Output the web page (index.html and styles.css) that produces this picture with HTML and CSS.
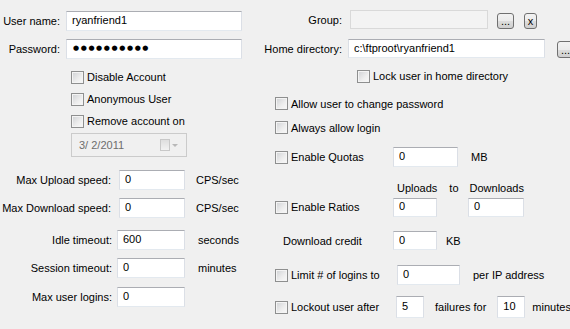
FILE: index.html
```html
<!DOCTYPE html>
<html lang="en">
<head>
    <meta charset="UTF-8">
    <title>User account</title>
    <link rel="stylesheet" href="styles.css">
</head>
<body>
    <div class="dialog">
        <div class="col-left">
            <div class="row r-user">
                <label class="lbl w-acct">User name:</label>
                <input type="text" class="field f-acct" value="ryanfriend1">
            </div>
            <div class="row r-pass">
                <label class="lbl w-acct">Password:</label>
                <input type="text" class="field f-acct secret" value="●●●●●●●●●●">
            </div>
            <div class="checks">
                <label class="check"><input type="checkbox"><span>Disable Account</span></label>
                <label class="check"><input type="checkbox"><span>Anonymous User</span></label>
                <label class="check"><input type="checkbox"><span>Remove account on</span></label>
            </div>
            <div class="date">
                <span class="date-text">3/ 2/2011</span>
                <span class="cal"></span>
                <span class="drop"></span>
            </div>
            <div class="row r-up">
                <label class="lbl w-speed">Max Upload speed:</label>
                <input type="text" class="field f-speed" value="0">
                <span class="unit">CPS/sec</span>
            </div>
            <div class="row r-down">
                <label class="lbl w-speed">Max Download speed:</label>
                <input type="text" class="field f-speed" value="0">
                <span class="unit">CPS/sec</span>
            </div>
            <div class="row r-idle">
                <label class="lbl w-time">Idle timeout:</label>
                <input type="text" class="field f-time" value="600">
                <span class="unit">seconds</span>
            </div>
            <div class="row r-sess">
                <label class="lbl w-time">Session timeout:</label>
                <input type="text" class="field f-time" value="0">
                <span class="unit">minutes</span>
            </div>
            <div class="row r-max">
                <label class="lbl w-time">Max user logins:</label>
                <input type="text" class="field f-time" value="0">
            </div>
        </div>

        <div class="col-right">
            <div class="row r-group">
                <label class="lbl w-dir">Group:</label>
                <input type="text" class="field f-group" value="" disabled>
                <button class="btn b-dots">...</button>
                <button class="btn b-x">x</button>
            </div>
            <div class="row r-home">
                <label class="lbl w-dir">Home directory:</label>
                <input type="text" class="field f-home" value="c:\ftproot\ryanfriend1">
                <button class="btn b-dots b-home">...</button>
            </div>
            <label class="check r-lock"><input type="checkbox"><span>Lock user in home directory</span></label>

            <div class="opts">
                <label class="check r-allow"><input type="checkbox"><span>Allow user to change password</span></label>
                <label class="check r-always"><input type="checkbox"><span>Always allow login</span></label>

                <div class="row r-quota">
                    <label class="check w-opt"><input type="checkbox"><span>Enable Quotas</span></label>
                    <input type="text" class="field f-quota" value="0">
                    <span class="unit u-mb">MB</span>
                </div>
                <div class="row r-ratio-head">
                    <span class="h-up">Uploads</span>
                    <span class="h-to">to</span>
                    <span>Downloads</span>
                </div>
                <div class="row r-ratio">
                    <label class="check w-opt"><input type="checkbox"><span>Enable Ratios</span></label>
                    <input type="text" class="field f-small" value="0">
                    <input type="text" class="field f-ratio" value="0">
                </div>
                <div class="row r-credit">
                    <span class="w-opt credit">Download credit</span>
                    <input type="text" class="field f-small" value="0">
                    <span class="unit u-kb">KB</span>
                </div>
                <div class="row r-limit">
                    <label class="check w-opt2"><input type="checkbox"><span>Limit # of logins to</span></label>
                    <input type="text" class="field f-limit" value="0">
                    <span class="unit u-ip">per IP address</span>
                </div>
                <div class="row r-lockout">
                    <label class="check w-opt2 lo"><input type="checkbox"><span>Lockout user after</span></label>
                    <input type="text" class="field f-tiny" value="5">
                    <span class="unit u-fail">failures for</span>
                    <input type="text" class="field f-tiny f-min" value="10">
                    <span class="unit u-min">minutes</span>
                </div>
            </div>
        </div>
    </div>
</body>
</html>
```

FILE: styles.css
```css
body {
    margin: 0;
    background-color: #f0f0f0;
    font-family: "Liberation Sans", Tahoma, Arial, sans-serif;
    font-size: 11px;
    color: #000;
}
.dialog {
    display: flex;
    width: 570px;
    height: 329px;
    overflow: hidden;
}
.col-left {
    width: 256px;
    flex: none;
}
.col-right {
    flex: 1;
    min-width: 0;
}
.row {
    display: flex;
    align-items: center;
}
.lbl {
    flex: none;
    text-align: right;
}
.field {
    box-sizing: border-box;
    flex: none;
    height: 20px;
    margin: 0;
    padding: 0 0 2px 5px;
    font-family: inherit;
    font-size: 11px;
    color: #000;
    background-color: #fff;
    border: 1px solid #e3e9ef;
    border-top-color: #abadb3;
    border-left-color: #dbdfe6;
    border-right-color: #dbdfe6;
    outline: none;
}
.field:disabled {
    background-color: #f3f3f3;
    border-color: #d9d9d9;
}
.unit {
    flex: none;
}

/* account */
.w-acct { width: 60px; }
.f-acct { width: 176px; margin-left: 6px; }
.r-user { margin-top: 11px; }
.r-pass { margin-top: 8px; }
.secret {
    font-family: "DejaVu Sans", sans-serif;
    font-size: 7px;
    letter-spacing: 1.6px;
    padding-left: 6px;
}

/* checkboxes */
.check {
    display: flex;
    align-items: center;
    height: 22px;
}
.check input {
    appearance: none;
    -webkit-appearance: none;
    flex: none;
    width: 13px;
    height: 13px;
    margin: 0 3px 0 0;
    border: 1px solid #8e8f8f;
    background: linear-gradient(135deg, #cfd1d4 0%, #eeeeee 60%, #f9f9f9 100%);
    box-shadow: inset 0 0 0 1px #f4f4f4;
}
.checks {
    margin-top: 7px;
    padding-left: 71px;
}

/* date picker */
.date {
    box-sizing: border-box;
    display: flex;
    align-items: center;
    width: 116px;
    height: 24px;
    margin: 1px 0 0 71px;
    padding-left: 7px;
    border: 1px solid #cbcbcb;
    color: #6d6d6d;
}
.date-text {
    flex: 1;
}
.cal {
    width: 8px;
    height: 10px;
    border: 1px solid #c8c8c8;
    background: linear-gradient(#dedede, #f2f2f2);
}
.drop {
    width: 0;
    height: 0;
    margin: 0 8px 0 2px;
    border-left: 3px solid transparent;
    border-right: 3px solid transparent;
    border-top: 3px solid #b8b8b8;
}

/* limits */
.w-speed { width: 111px; }
.f-speed { width: 66px; margin-left: 8px; }
.r-up .unit, .r-down .unit { margin-left: 11px; }
.r-up { margin-top: 13px; }
.r-down { margin-top: 8px; }
.w-time { width: 112px; }
.f-time { width: 68px; margin-left: 5px; }
.r-idle .unit, .r-sess .unit { margin-left: 13px; }
.r-idle { margin-top: 12px; }
.r-sess { margin-top: 8px; }
.r-max { margin-top: 9px; }

/* group / home */
.w-dir { width: 86px; }
.r-group { margin-top: 10px; height: 19px; }
.f-group { width: 138px; height: 19px; margin-left: 8px; }
.r-home { margin-top: 10px; height: 19px; }
.f-home { width: 197px; height: 19px; margin-left: 6px; }
.btn {
    box-sizing: border-box;
    flex: none;
    height: 16px;
    padding: 0;
    font-family: inherit;
    font-size: 11px;
    line-height: 12px;
    color: #000;
    border: 1px solid #707070;
    border-radius: 3px;
    background: linear-gradient(#f2f2f2 0%, #ebebeb 50%, #dddddd 51%, #cfcfcf 100%);
}
.b-dots {
    width: 17px;
    margin-left: 9px;
    margin-top: 3px;
}
.b-x {
    width: 13px;
    margin-left: 10px;
    margin-top: 3px;
}
.b-home {
    margin-left: 12px;
    height: 17px;
    margin-top: 2px;
}
.r-lock {
    margin: 7px 0 0 101px;
    height: 22px;
}

/* options */
.opts {
    padding-left: 19px;
}
.r-allow { margin-top: 10px; height: 13px; }
.r-always { margin-top: 11px; height: 13px; }
.w-opt { width: 118px; flex: none; }
.w-opt2 { width: 122px; flex: none; }
.r-quota { margin-top: 12px; }
.f-quota { width: 65px; }
.u-mb { margin-left: 13px; }
.r-ratio-head { margin-top: 13px; height: 13px; padding-left: 122px; }
.h-up { margin-right: 12px; }
.h-to { margin-right: 11px; }
.r-ratio { margin-top: 2px; }
.f-small { width: 44px; height: 19px; }
.f-ratio { width: 56px; height: 19px; margin-left: 31px; }
.credit { padding-left: 8px; box-sizing: border-box; }
.r-credit { margin-top: 13px; }
.u-kb { margin-left: 9px; }
.r-limit { margin-top: 14px; }
.f-limit { width: 63px; }
.u-ip { margin-left: 13px; }
.r-lockout { margin-top: 10px; }
.lo { width: 121px; }
.f-tiny { width: 28px; height: 22px; }
.u-fail { margin-left: 11px; }
.f-min { margin-left: 11px; }
.u-min { margin-left: 7px; }
```
